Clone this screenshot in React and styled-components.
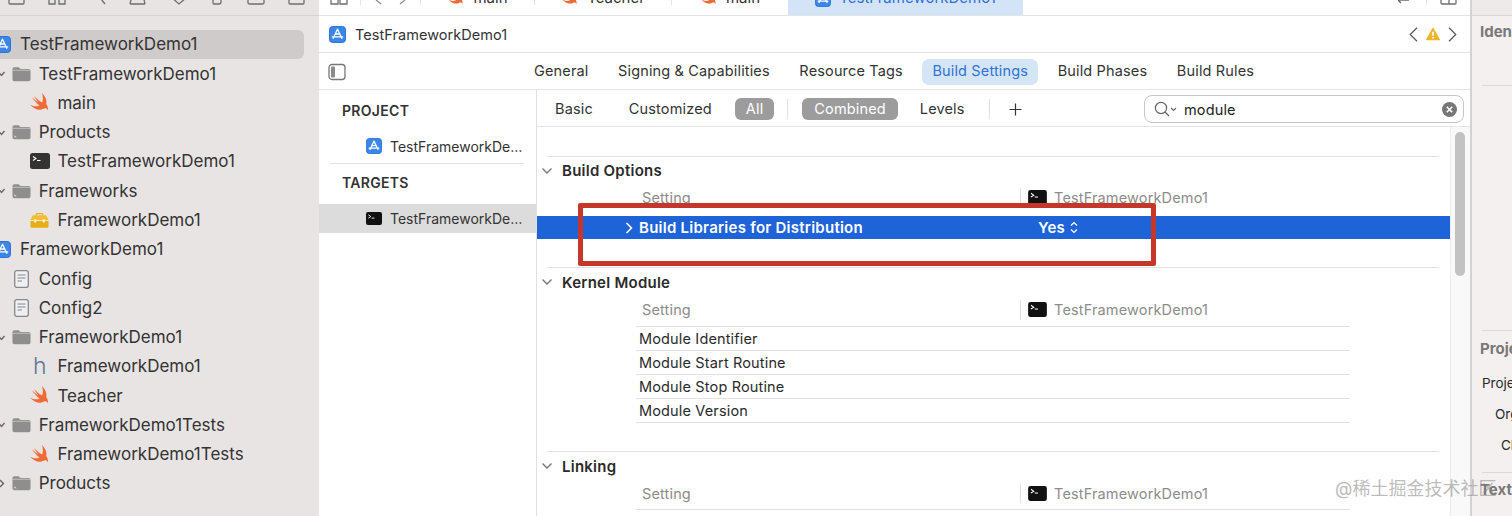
import styled, { createGlobalStyle } from 'styled-components'

const GlobalStyle = createGlobalStyle`
  html, body {
    margin: 0;
    padding: 0;
    background: #fff;
  }
  body {
    font-family: Inter, "Liberation Sans", "Noto Sans CJK SC", sans-serif;
    color: #2a2a2a;
  }
`

const Page = styled.div`
  position: relative;
  display: grid;
  grid-template-columns: 319px 1fr 42px;
  width: 1512px;
  height: 516px;
  overflow: hidden;
`

/* navigator */
const Sidebar = styled.div`
  background: #e8e4e4;
  overflow: hidden;
`

const SideToolbar = styled.div`
  display: flex;
  justify-content: space-between;
  align-items: flex-end;
  height: 5px;
  padding: 0 14px 10px 8px;
  border-bottom: 1px solid #d5d2d2;
  overflow: hidden;
`

const Tree = styled.div`
  margin: 13.8px 0 0 -7px;
  width: 311px;
`

const TreeRow = styled.div`
  display: flex;
  align-items: center;
  gap: 8px;
  height: 29.27px;
  padding-left: ${(p) => p.level * 18.7}px;
  border-radius: 6px;
  background: ${(p) => (p.selected ? '#cfcbcb' : 'transparent')};
  font-size: 17px;
  color: #333;
  white-space: nowrap;
`

const Disclosure = styled.svg`
  flex: none;
  width: 7px;
  height: 9px;
  margin: 0 -1px 0 -14px;
  color: #666;
`

const IconCell = styled.div`
  flex: none;
  display: flex;
  align-items: center;
  justify-content: center;
  width: 19px;
  height: 20px;
`

const HeaderGlyph = styled.span`
  font-size: 23px;
  font-weight: 300;
  line-height: 20px;
  color: #5f7690;
`

/* editor */
const Editor = styled.div`
  display: flex;
  flex-direction: column;
  min-width: 0;
`

const TabStrip = styled.div`
  flex: none;
  display: flex;
  height: 15px;
  overflow: hidden;
  border-bottom: 1px solid #e4e4e4;
`

const StripTools = styled.div`
  flex: none;
  display: flex;
  align-items: flex-end;
  width: 102px;
  height: 15px;
  padding: 0 0 10px 11px;
  box-sizing: border-box;
  overflow: hidden;
`

const StripDivider = styled.div`
  flex: none;
  width: 1px;
  height: 5px;
  margin-left: ${(p) => p.left || 0}px;
  background: #e2e2e2;
`

const FileTab = styled.div`
  flex: none;
  display: flex;
  align-items: flex-end;
  justify-content: center;
  gap: 8px;
  width: ${(p) => p.width}px;
  height: 15px;
  padding-bottom: 8px;
  box-sizing: border-box;
  overflow: hidden;
  background: ${(p) => (p.active ? '#d3e4f8' : 'transparent')};
  color: ${(p) => (p.active ? '#2f6fd6' : '#333')};
  font-size: 15px;
  line-height: 18px;
`

const StripEnd = styled.div`
  margin-left: auto;
  display: flex;
  align-items: flex-end;
  gap: 13px;
  height: 15px;
  padding: 0 13px 10px 0;
  box-sizing: border-box;
  overflow: hidden;
`

const PathBar = styled.div`
  flex: none;
  display: flex;
  align-items: center;
  gap: 9px;
  height: 36px;
  padding: 0 10px;
  border-bottom: 1px solid #e4e4e4;
  font-size: 14.5px;
  letter-spacing: 0.05px;
  color: #333;
`

const PathNav = styled.div`
  margin-left: auto;
  display: flex;
  align-items: center;
  gap: 8px;
  padding-right: 3px;
`

const TabsRow = styled.div`
  flex: none;
  display: flex;
  align-items: center;
  gap: 9.6px;
  height: 35px;
  padding: 1px 0 0 9px;
  border-bottom: 1px solid #e4e4e4;
`

const PanelToggle = styled.svg`
  width: 18px;
  height: 18px;
  margin-right: 168.4px;
`

const EditorTab = styled.div`
  padding: 3px 10px 5px;
  height: 26px;
  box-sizing: border-box;
  line-height: 18px;
  border-radius: 7px;
  font-size: 14.5px;
  letter-spacing: 0.15px;
  background: ${(p) => (p.active ? '#d5e5f8' : 'transparent')};
  color: ${(p) => (p.active ? '#2f73d4' : '#333')};
`

const SplitView = styled.div`
  flex: 1;
  display: flex;
  min-height: 0;
`

/* project and target list */
const TargetList = styled.div`
  flex: none;
  width: 217px;
  border-right: 1px solid #e0e0e0;
`

const ListHeading = styled.div`
  display: flex;
  align-items: center;
  height: ${(p) => p.height}px;
  padding: ${(p) => p.above || 0}px 0 ${(p) => p.below || 0}px 23px;
  font-size: 14px;
  font-weight: 600;
  letter-spacing: 0.3px;
  color: #333;
`

const ListRow = styled.div`
  display: flex;
  align-items: center;
  gap: 8px;
  height: ${(p) => p.height}px;
  padding-left: 47px;
  padding-right: 12px;
  background: ${(p) => (p.selected ? '#dcdcdc' : 'transparent')};
  font-size: 14px;
  color: #333;
`

const Ellipsis = styled.span`
  min-width: 0;
  overflow: hidden;
  text-overflow: ellipsis;
  white-space: nowrap;
`

const ListRule = styled.div`
  height: 1px;
  margin: 0 12px 0 11px;
  background: #e4e4e4;
`

/* settings */
const SettingsPane = styled.div`
  flex: 1;
  display: flex;
  flex-direction: column;
  min-width: 0;
`

const FilterBar = styled.div`
  flex: none;
  display: flex;
  align-items: center;
  height: 34px;
  padding: 2px 0 0 18px;
  border-bottom: 1px solid #e4e4e4;
  font-size: 14.5px;
  letter-spacing: 0.15px;
  color: #333;
`

const FilterItem = styled.div`
  height: 22px;
  line-height: 22px;
  padding: 0 ${(p) => p.pad}px;
  margin-right: ${(p) => p.after}px;
  border-radius: 6px;
  background: ${(p) => (p.active ? '#9c9c9c' : 'transparent')};
  color: ${(p) => (p.active ? '#fff' : '#333')};
`

const FilterDivider = styled.div`
  width: 1px;
  height: 20px;
  margin-right: ${(p) => p.after}px;
  background: #e0e0e0;
`

const SearchField = styled.div`
  display: flex;
  align-items: center;
  gap: 6px;
  width: 320px;
  height: 28px;
  margin-left: auto;
  margin-right: 6px;
  padding: 0 6px 0 8px;
  box-sizing: border-box;
  border: 1px solid #c6c6c6;
  border-radius: 8px;
  color: #222;
`

const SearchText = styled.span`
  flex: 1;
  margin-left: 1px;
`

const ScrollArea = styled.div`
  flex: 1;
  display: flex;
  min-height: 0;
`

const SettingsList = styled.div`
  flex: 1;
  min-width: 0;
  overflow: hidden;
  font-size: 14.5px;
  letter-spacing: 0.15px;
`

const SectionRule = styled.div`
  height: 1px;
  margin: ${(p) => p.top}px 11px 0 10px;
  background: #e2e2e2;
`

const SectionHeader = styled.div`
  display: flex;
  align-items: center;
  gap: 9px;
  height: ${(p) => p.height}px;
  padding: 0 0 2px 4px;
  box-sizing: border-box;
  font-size: 15px;
  font-weight: 600;
  letter-spacing: 0.25px;
  color: #2a2a2a;
`

const SectionChevron = styled.svg`
  flex: none;
  width: 12px;
  height: 8px;
  color: #777;
`

const ColumnHead = styled.div`
  display: grid;
  grid-template-columns: 384px 330px;
  align-items: center;
  height: ${(p) => p.height}px;
  width: 714px;
  margin: 0 0 ${(p) => p.below || 0}px 99px;
  padding-bottom: ${(p) => (p.ruled ? 5 : 0)}px;
  border-bottom: ${(p) => (p.ruled ? '1px solid #e2e2e2' : 'none')};
  color: #8c8c8c;
`

const ColumnLabel = styled.div`
  padding-left: 6px;
`

const ColumnValue = styled.div`
  display: flex;
  align-items: center;
  gap: 7px;
  height: 20px;
  padding-left: 7px;
  border-left: 1px solid #e2e2e2;
`

const SelectedRow = styled.div`
  display: grid;
  grid-template-columns: 395px 1fr;
  align-items: center;
  height: 23px;
  padding-left: 88px;
  background: #1f63d8;
  color: #fff;
  font-size: 15px;
  font-weight: 600;
  letter-spacing: 0.25px;
`

const RowTitle = styled.div`
  display: flex;
  align-items: center;
  gap: 6px;
`

const RowValue = styled.div`
  display: flex;
  align-items: center;
  gap: 5px;
  padding-left: 18px;
`

const TableRow = styled.div`
  display: flex;
  align-items: center;
  width: 711px;
  height: 23px;
  margin-left: 99px;
  padding-left: 3px;
  border-bottom: 1px solid #e2e2e2;
  color: #2a2a2a;
`

const ScrollTrack = styled.div`
  flex: none;
  width: 19px;
  background: #f9f9f9;
  border-left: 1px solid #ececec;
`

const ScrollThumb = styled.div`
  width: 10px;
  height: 144px;
  margin: 5px 0 0 4px;
  border-radius: 5px;
  background: #c2c2c2;
`

/* inspector */
const Inspector = styled.div`
  background: #f4f0f0;
  border-left: 2px solid #d5d2d2;
  overflow: hidden;
  white-space: nowrap;
`

const InspectorTop = styled.div`
  height: 15px;
  background: #eeeaea;
  border-bottom: 1px solid #d9d6d6;
`

const InspectorHeading = styled.div`
  height: ${(p) => p.height}px;
  line-height: ${(p) => p.height}px;
  margin-bottom: ${(p) => p.below || 0}px;
  padding-left: 8px;
  font-size: 15px;
  font-weight: 700;
  color: #7a7878;
`

const InspectorRule = styled.div`
  height: 1px;
  margin: ${(p) => p.top}px 0 0 10px;
  background: #dcd9d9;
`

const InspectorLabel = styled.div`
  height: 31px;
  line-height: 31px;
  padding-left: ${(p) => p.indent}px;
  font-size: 13.5px;
  color: #2a2a2a;
`

/* things that sit on top of the screenshot */
const Highlight = styled.div`
  position: absolute;
  left: 578px;
  top: 203px;
  width: 578px;
  height: 63px;
  box-sizing: border-box;
  border: 5px solid #c5372b;
  border-radius: 2px;
`

const Watermark = styled.div`
  position: absolute;
  left: 1335px;
  top: 478px;
  font-size: 18px;
  line-height: 22px;
  color: rgba(130, 130, 130, 0.55);
  white-space: nowrap;
`

const AppIcon = ({ size = 17 }) => (
  <svg width={size} height={size} viewBox="0 0 18 18" style={{ flex: 'none' }}>
    <rect x="0.5" y="0.5" width="17" height="17" rx="3.5" fill="#3c86ea" stroke="#2a6fd0" />
    <path d="M9 3.5 L4.5 13 M9 3.5 L13.5 13 M3.5 11.5 H14.5 M7 8.5 L11 8.5" stroke="#fff" strokeWidth="1.4" fill="none" strokeLinecap="round" />
  </svg>
)

const SwiftIcon = ({ size = 18 }) => (
  <svg width={size} height={size} viewBox="0 0 24 24" style={{ flex: 'none' }}>
    <path
      d="M14.5 2 C18 5.5 20 9.5 19 13.5 C21 16 21 18.5 20.5 20 C19.5 17.8 17.8 17.6 16 18.6 C12.5 20.5 6.5 19.5 2 14 C5.5 16.2 9.5 16.5 12 15 C9 12.8 6 9.5 4 6.5 C7 9.3 9.5 11 11.2 12 C9 9.8 7.5 7.5 6.5 5.5 C9 8 12.5 11 14.8 12 C16 9 15.8 5.5 14.5 2 Z"
      fill="#ef6a35"
    />
  </svg>
)

const FolderIcon = ({ badge }) => (
  <svg width="20" height="16" viewBox="0 0 20 16">
    <path d="M0.5 3 Q0.5 1 2.5 1 H7 L9 2.8 H17.5 Q19.5 2.8 19.5 4.8 V13.5 Q19.5 15.5 17.5 15.5 H2.5 Q0.5 15.5 0.5 13.5 Z" fill="#8f8e8e" />
    <rect x="0.5" y="3.6" width="19" height="0.9" fill="#c9c7c7" />
    {badge && <path d="M2.5 11.5 L5 13.5 H2.5 Z" fill="#e4e2e2" />}
  </svg>
)

const TerminalIcon = ({ width = 20, height = 16, dark = '#333' }) => (
  <svg width={width} height={height} viewBox="0 0 20 16" style={{ flex: 'none' }}>
    <rect x="0" y="0" width="20" height="16" rx="2.5" fill={dark} />
    <path d="M3 3.5 L6 5.5 L3 7.5" stroke="#fff" strokeWidth="1.1" fill="none" />
    <path d="M7 7.5 H10.5" stroke="#fff" strokeWidth="1.1" />
  </svg>
)

const ToolboxIcon = () => (
  <svg width="21" height="17" viewBox="0 0 21 17">
    <path d="M7 3 V1.8 Q7 0.8 8 0.8 H13 Q14 0.8 14 1.8 V3" stroke="#e9ae16" strokeWidth="1.4" fill="none" />
    <path d="M0.5 8 L2.5 3.5 Q3 2.8 4 2.8 H17 Q18 2.8 18.5 3.5 L20.5 8 Z" fill="#f2bf2c" />
    <path d="M0.5 9 H20.5 V15 Q20.5 16.5 19 16.5 H2 Q0.5 16.5 0.5 15 Z" fill="#e9ae16" />
    <rect x="4.5" y="7.2" width="2.6" height="3.4" rx="0.6" fill="#fff3c9" />
    <rect x="13.9" y="7.2" width="2.6" height="3.4" rx="0.6" fill="#fff3c9" />
  </svg>
)

const DocumentIcon = () => (
  <svg width="15" height="18" viewBox="0 0 15 18">
    <rect x="0.7" y="0.7" width="13.6" height="16.6" rx="2" fill="#f1efef" stroke="#7f8a92" strokeWidth="1.3" />
    <path d="M3.5 5 H11.5 M3.5 8 H11.5 M3.5 11 H8" stroke="#7f8a92" strokeWidth="1.1" />
  </svg>
)

const TreeChevron = ({ open }) => (
  <Disclosure viewBox="0 0 7 9">
    <path d={open ? 'M0.5 3 L3.5 6.5 L6.5 3' : 'M2 1 L5.5 4.5 L2 8'} stroke="currentColor" strokeWidth="1.4" fill="none" />
  </Disclosure>
)

const Chevron = ({ dir }) => (
  <svg width="9" height="15" viewBox="0 0 9 15" style={{ flex: 'none' }}>
    <path d={dir === 'left' ? 'M8 0.8 L1.2 7.5 L8 14.2' : 'M1 0.8 L7.8 7.5 L1 14.2'} stroke="#555" strokeWidth="1.2" fill="none" />
  </svg>
)

const WarningIcon = () => (
  <svg width="14" height="14" viewBox="0 0 15 14" style={{ flex: 'none' }}>
    <path d="M7.5 1 L14.3 13 H0.7 Z" fill="#f0b428" stroke="#f0b428" strokeWidth="1.2" strokeLinejoin="round" />
    <path d="M7.5 4.5 V9" stroke="#fff" strokeWidth="1.8" />
    <circle cx="7.5" cy="11" r="1" fill="#fff" />
  </svg>
)

const ToolGlyph = ({ d, w = 18 }) => (
  <svg width={w} height="18" viewBox={`0 0 ${w} 18`} style={{ flex: 'none' }}>
    <path d={d} stroke="#6d6d6d" strokeWidth="1.3" fill="none" />
  </svg>
)

const sideTools = [
  { d: 'M1 6 V16 Q1 17 2 17 H15 Q16 17 16 16 V6', w: 17 },
  { d: 'M1 12 H7 V17 H1 Z M11 12 H17 V17 H11 Z', w: 18 },
  { d: 'M3 8 A6 6 0 0 0 11 12 L15 17', w: 16 },
  { d: 'M1 17 H16 M1 17 L3 8 M16 17 L14 8', w: 17 },
  { d: 'M1 10 L9 17 L17 10', w: 18 },
  { d: 'M2 12 V16 Q2 17 3 17 H8 Q10 17 10 15 V10', w: 12 },
  { d: 'M1 12 V16 Q1 17 3 17 H15 Q17 17 17 16 V12', w: 18 },
  { d: 'M1 6 V16 Q1 17 2 17 H15 Q16 17 16 16 V6 M1 11 H16', w: 17 },
]

const tree = [
  { level: 0, label: 'TestFrameworkDemo1', icon: 'app', selected: true },
  { level: 1, label: 'TestFrameworkDemo1', icon: 'folder', open: true },
  { level: 2, label: 'main', icon: 'swift' },
  { level: 1, label: 'Products', icon: 'badge', open: true },
  { level: 2, label: 'TestFrameworkDemo1', icon: 'terminal' },
  { level: 1, label: 'Frameworks', icon: 'badge', open: true },
  { level: 2, label: 'FrameworkDemo1', icon: 'toolbox' },
  { level: 0, label: 'FrameworkDemo1', icon: 'app' },
  { level: 1, label: 'Config', icon: 'doc' },
  { level: 1, label: 'Config2', icon: 'doc' },
  { level: 1, label: 'FrameworkDemo1', icon: 'folder', open: true },
  { level: 2, label: 'FrameworkDemo1', icon: 'header' },
  { level: 2, label: 'Teacher', icon: 'swift' },
  { level: 1, label: 'FrameworkDemo1Tests', icon: 'folder', open: true },
  { level: 2, label: 'FrameworkDemo1Tests', icon: 'swift' },
  { level: 1, label: 'Products', icon: 'badge', closed: true },
]

const treeIcon = (name) => {
  if (name === 'app') return <AppIcon size={17} />
  if (name === 'folder') return <FolderIcon />
  if (name === 'badge') return <FolderIcon badge />
  if (name === 'swift') return <SwiftIcon size={23} />
  if (name === 'terminal') return <TerminalIcon dark="#333" />
  if (name === 'toolbox') return <ToolboxIcon />
  if (name === 'doc') return <DocumentIcon />
  return <HeaderGlyph>h</HeaderGlyph>
}

const editorTabs = ['General', 'Signing & Capabilities', 'Resource Tags', 'Build Settings', 'Build Phases', 'Build Rules']

const DownChevron = () => (
  <SectionChevron viewBox="0 0 12 8">
    <path d="M1.5 1.5 L6 6 L10.5 1.5" stroke="currentColor" strokeWidth="1.4" fill="none" />
  </SectionChevron>
)

const TargetColumn = () => (
  <ColumnValue>
    <TerminalIcon width={19} height={15} dark="#111" />
    TestFrameworkDemo1
  </ColumnValue>
)

const App = () => {
  return (
    <Page>
      <GlobalStyle />
      <Sidebar>
        <SideToolbar>
          {sideTools.map((tool, idx) => (
            <ToolGlyph key={idx} d={tool.d} w={tool.w} />
          ))}
        </SideToolbar>
        <Tree>
          {tree.map((item, idx) => (
            <TreeRow key={idx} level={item.level} selected={item.selected}>
              {item.open && <TreeChevron open />}
              {item.closed && <TreeChevron />}
              <IconCell>{treeIcon(item.icon)}</IconCell>
              {item.label}
            </TreeRow>
          ))}
        </Tree>
      </Sidebar>

      <Editor>
        <TabStrip>
          <StripTools>
            <ToolGlyph d="M1 10 H8 V17 H1 Z M10 10 H17 V17 H10 Z" />
            <svg width="61" height="18" viewBox="0 0 61 18" style={{ flex: 'none', marginLeft: 12 }}>
              <path d="M16 13 L21 17 M45 13 L40 17" stroke="#8a8a8a" strokeWidth="1.2" fill="none" />
              <path d="M0.5 8 V18 M60.5 8 V18" stroke="#e2e2e2" />
            </svg>
          </StripTools>
          <FileTab width={113}>
            <SwiftIcon size={18} />
            main
          </FileTab>
          <StripDivider />
          <FileTab width={136}>
            <SwiftIcon size={18} />
            Teacher
          </FileTab>
          <StripDivider />
          <FileTab width={116}>
            <SwiftIcon size={18} />
            main
          </FileTab>
          <FileTab width={235} active>
            <AppIcon size={16} />
            TestFrameworkDemo1
          </FileTab>
          <StripEnd>
            <ToolGlyph d="M0 13 H11 M3 10 L0 13 L3 16" w={12} />
            <StripDivider left={3} />
            <ToolGlyph d="M1 6 V16 Q1 17 2 17 H15 Q16 17 16 16 V6 M9 6 V17" w={17} />
          </StripEnd>
        </TabStrip>

        <PathBar>
          <AppIcon size={17} />
          TestFrameworkDemo1
          <PathNav>
            <Chevron dir="left" />
            <WarningIcon />
            <Chevron dir="right" />
          </PathNav>
        </PathBar>

        <TabsRow>
          <PanelToggle viewBox="0 0 18 18">
            <rect x="1" y="1.5" width="16" height="15" rx="3" fill="none" stroke="#777" strokeWidth="1.3" />
            <rect x="3" y="3.5" width="4" height="11" rx="1" fill="#8a8a8a" />
          </PanelToggle>
          {editorTabs.map((item) => (
            <EditorTab key={item} active={item === 'Build Settings'}>
              {item}
            </EditorTab>
          ))}
        </TabsRow>

        <SplitView>
          <TargetList>
            <ListHeading height={38} above={1}>PROJECT</ListHeading>
            <ListRow height={34}>
              <AppIcon size={16} />
              <Ellipsis>TestFrameworkDemo1</Ellipsis>
            </ListRow>
            <ListRule />
            <ListHeading height={36} below={4}>TARGETS</ListHeading>
            <ListRow height={29} selected>
              <TerminalIcon width={16} height={13} dark="#111" />
              <Ellipsis>TestFrameworkDemo1</Ellipsis>
            </ListRow>
          </TargetList>

          <SettingsPane>
            <FilterBar>
              <FilterItem pad={0} after={36}>Basic</FilterItem>
              <FilterItem pad={0} after={23}>Customized</FilterItem>
              <FilterItem pad={11} after={13} active>All</FilterItem>
              <FilterDivider after={14} />
              <FilterItem pad={12} after={22} active>Combined</FilterItem>
              <FilterItem pad={0} after={24}>Levels</FilterItem>
              <FilterDivider after={19} />
              <svg width="13" height="13" viewBox="0 0 13 13">
                <path d="M6.5 0.5 V12.5 M0.5 6.5 H12.5" stroke="#333" strokeWidth="1.2" />
              </svg>
              <SearchField>
                <svg width="24" height="18" viewBox="0 0 24 18" style={{ flex: 'none' }}>
                  <circle cx="8" cy="8" r="5.6" fill="none" stroke="#666" strokeWidth="1.2" />
                  <path d="M12 12 L16 16" stroke="#666" strokeWidth="1.3" />
                  <path d="M18 8 L20.5 10.5 L23 8" stroke="#666" strokeWidth="1.1" fill="none" />
                </svg>
                <SearchText>module</SearchText>
                <svg width="15" height="15" viewBox="0 0 15 15" style={{ flex: 'none' }}>
                  <circle cx="7.5" cy="7.5" r="7.5" fill="#767676" />
                  <path d="M4.8 4.8 L10.2 10.2 M10.2 4.8 L4.8 10.2" stroke="#fff" strokeWidth="1.6" />
                </svg>
              </SearchField>
            </FilterBar>

            <ScrollArea>
              <SettingsList>
                <SectionRule top={29} />
                <SectionHeader height={29}>
                  <DownChevron />
                  Build Options
                </SectionHeader>
                <ColumnHead height={23} below={7}>
                  <ColumnLabel>Setting</ColumnLabel>
                  <TargetColumn />
                </ColumnHead>
                <SelectedRow>
                  <RowTitle>
                    <svg width="8" height="12" viewBox="0 0 8 12" style={{ flex: 'none' }}>
                      <path d="M1.5 1 L6.5 6 L1.5 11" stroke="#fff" strokeWidth="1.5" fill="none" />
                    </svg>
                    Build Libraries for Distribution
                  </RowTitle>
                  <RowValue>
                    Yes
                    <svg width="8" height="13" viewBox="0 0 8 13" style={{ flex: 'none' }}>
                      <path d="M1 4.5 L4 1.5 L7 4.5 M1 8.5 L4 11.5 L7 8.5" stroke="#fff" strokeWidth="1.2" fill="none" />
                    </svg>
                  </RowValue>
                </SelectedRow>

                <SectionRule top={28} />
                <SectionHeader height={30}>
                  <DownChevron />
                  Kernel Module
                </SectionHeader>
                <ColumnHead height={23} ruled>
                  <ColumnLabel>Setting</ColumnLabel>
                  <TargetColumn />
                </ColumnHead>
                <TableRow>Module Identifier</TableRow>
                <TableRow>Module Start Routine</TableRow>
                <TableRow>Module Stop Routine</TableRow>
                <TableRow>Module Version</TableRow>

                <SectionRule top={28} />
                <SectionHeader height={30}>
                  <DownChevron />
                  Linking
                </SectionHeader>
                <ColumnHead height={22} ruled>
                  <ColumnLabel>Setting</ColumnLabel>
                  <TargetColumn />
                </ColumnHead>
              </SettingsList>
              <ScrollTrack>
                <ScrollThumb />
              </ScrollTrack>
            </ScrollArea>
          </SettingsPane>
        </SplitView>
      </Editor>

      <Inspector>
        <InspectorTop />
        <InspectorHeading height={32}>Identity and Type</InspectorHeading>
        <InspectorRule top={37} />
        <InspectorRule top={244} />
        <InspectorHeading height={35} below={2}>Project Document</InspectorHeading>
        <InspectorLabel indent={10}>Project Format</InspectorLabel>
        <InspectorLabel indent={23}>Organization</InspectorLabel>
        <InspectorLabel indent={29}>Class Prefix</InspectorLabel>
        <InspectorRule top={11} />
        <InspectorHeading height={33}>Text Settings</InspectorHeading>
      </Inspector>

      <Highlight />
      <Watermark>@稀土掘金技术社区</Watermark>
    </Page>
  )
}

export default App
